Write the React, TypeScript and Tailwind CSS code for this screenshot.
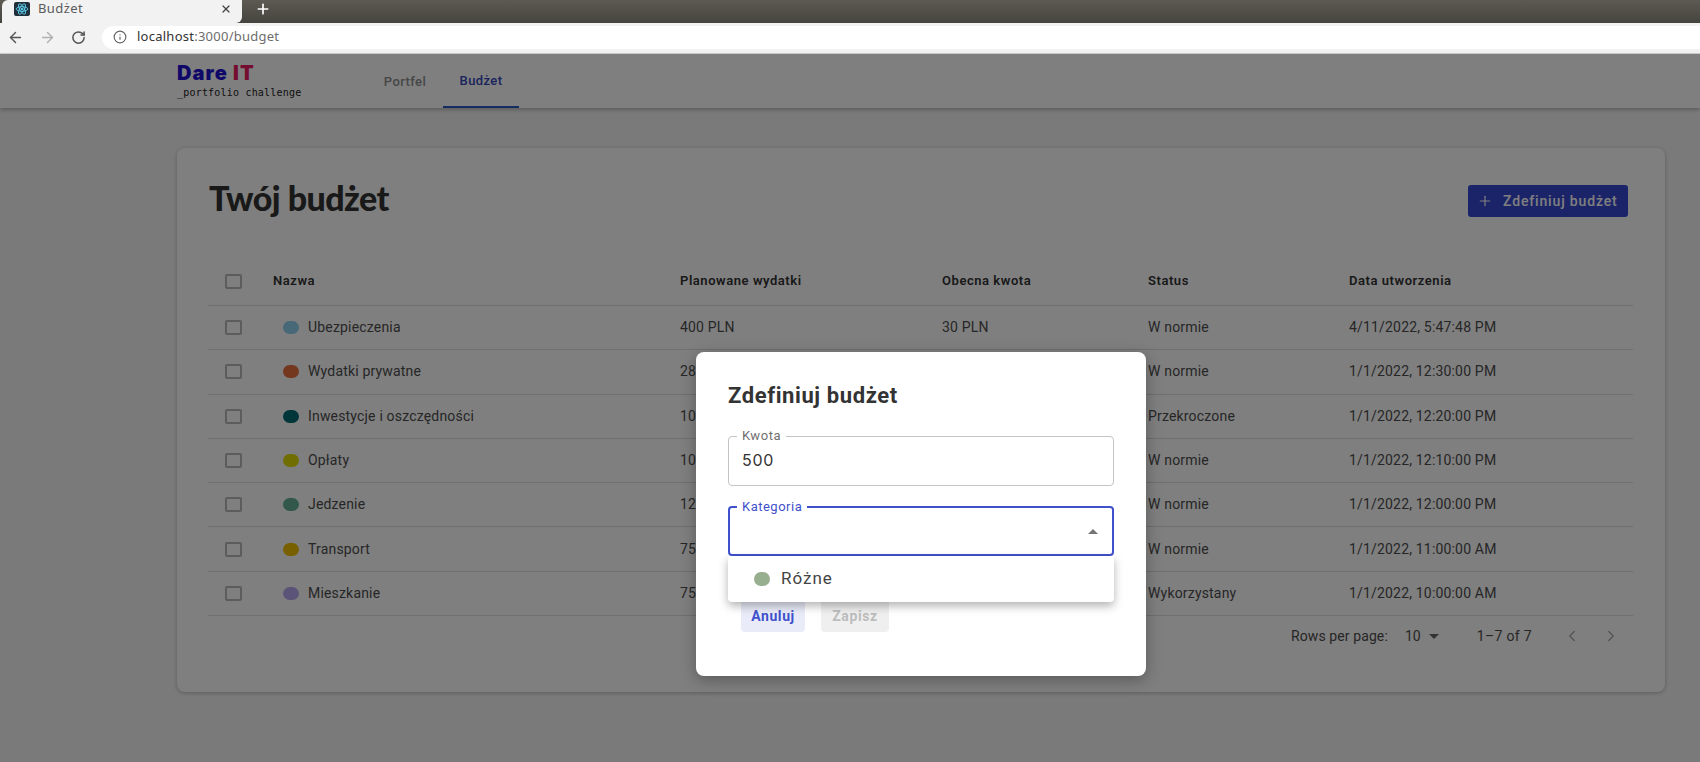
import { ArrowLeft, ArrowRight, ChevronLeft, ChevronRight, Info, Plus, RotateCw, X } from "lucide-react";

type BudgetRow = {
  name: string;
  color: string;
  planned: string;
  current: string;
  status: string;
  created: string;
};

const rows: BudgetRow[] = [
  { name: "Ubezpieczenia", color: "#8fd0ee", planned: "400 PLN", current: "30 PLN", status: "W normie", created: "4/11/2022, 5:47:48 PM" },
  { name: "Wydatki prywatne", color: "#e8703c", planned: "280 PLN", current: "100 PLN", status: "W normie", created: "1/1/2022, 12:30:00 PM" },
  { name: "Inwestycje i oszczędności", color: "#006b75", planned: "100 PLN", current: "150 PLN", status: "Przekroczone", created: "1/1/2022, 12:20:00 PM" },
  { name: "Opłaty", color: "#e0dc00", planned: "100 PLN", current: "50 PLN", status: "W normie", created: "1/1/2022, 12:10:00 PM" },
  { name: "Jedzenie", color: "#62b094", planned: "120 PLN", current: "80 PLN", status: "W normie", created: "1/1/2022, 12:00:00 PM" },
  { name: "Transport", color: "#f0c000", planned: "75 PLN", current: "20 PLN", status: "W normie", created: "1/1/2022, 11:00:00 AM" },
  { name: "Mieszkanie", color: "#b8a8f0", planned: "750 PLN", current: "750 PLN", status: "Wykorzystany", created: "1/1/2022, 10:00:00 AM" },
];

const gridCols = "grid grid-cols-[65px_407px_262px_206px_201px_1fr] items-center";

const Checkbox = () => (
  <div className="ml-[17px] h-[15px] w-[17px] rounded-[2px] border-2 border-[#b8b8b8]" />
);

const BrowserChrome = () => (
  <div className="font-['Noto_Sans',sans-serif]">
    <div className="flex h-[23px] items-start bg-gradient-to-b from-[#5c5a53] to-[#46443e]">
      <div className="ml-[2px] flex h-[23px] w-[240px] items-center rounded-tl-md rounded-br-md bg-[#f2f2f2] pb-[6px] pl-[12px] pr-[4px]">
        <div className="flex h-[14px] w-[16px] items-center justify-center rounded-[2px] bg-[#20303a]">
          <svg viewBox="0 0 24 24" width="14" height="14" fill="none" stroke="#61dafb" strokeWidth="1.4">
            <ellipse cx="12" cy="12" rx="10" ry="4" />
            <ellipse cx="12" cy="12" rx="10" ry="4" transform="rotate(60 12 12)" />
            <ellipse cx="12" cy="12" rx="10" ry="4" transform="rotate(120 12 12)" />
            <circle cx="12" cy="12" r="1.6" fill="#61dafb" />
          </svg>
        </div>
        <span className="ml-[8px] text-[13px] tracking-[0.4px] text-[#5a5a5a]">Budżet</span>
        <X className="ml-auto mr-[6px] text-[#444]" size={12} strokeWidth={2.5} />
      </div>
      <Plus className="ml-[13px] mt-[1px] text-white" size={16} strokeWidth={2.5} />
    </div>
    <div className="flex h-[31px] items-center border-b border-[#d0d0d0] bg-[#f2f2f2] pb-[2px]">
      <ArrowLeft className="ml-[7px] text-[#555]" size={17} strokeWidth={2} />
      <ArrowRight className="ml-[15px] text-[#b0b0b0]" size={17} strokeWidth={2} />
      <RotateCw className="ml-[15px] text-[#555]" size={15} strokeWidth={2.4} />
      <div className="ml-[16px] flex h-[23px] flex-1 items-center rounded-l-full bg-white pl-[11px]">
        <Info className="text-[#666]" size={14} strokeWidth={2} />
        <span className="ml-[10px] text-[13px] tracking-[0.25px] text-[#333]">
          localhost<span className="text-[#6d6d6d]">:3000/budget</span>
        </span>
      </div>
    </div>
  </div>
);

const TopNav = () => (
  <header className="flex h-[54px] bg-white pl-[177px] shadow-[0_2px_4px_rgba(0,0,0,0.25)]">
    <div className="w-[190px] pt-[9px]">
      <div className="font-['Inter',sans-serif] text-[20px] font-black leading-[20px] tracking-[1.1px] text-[#2010d0]">
        Dare <span className="text-[#e81a60]">IT</span>
      </div>
      <div className="mt-[4px] font-['DejaVu_Sans_Mono',monospace] text-[10px] leading-[12px] tracking-[0.2px] text-[#222]">
        _portfolio challenge
      </div>
    </div>
    <nav className="flex text-[13px] font-medium tracking-[0.4px]">
      <div className="flex w-[76px] items-center justify-center pt-[2px] text-[#8e8e8e]">Portfel</div>
      <div className="flex w-[76px] items-center justify-center border-b-2 border-[#2a5bc0] pt-[2px] text-[#3448b8]">
        Budżet
      </div>
    </nav>
  </header>
);

const BudgetCard = () => (
  <section className="mx-[35px] ml-[177px] mt-[40px] h-[544px] rounded-lg bg-white pl-[31px] pr-[32px] shadow-[0_1px_4px_rgba(0,0,0,0.25)]">
    <div className="flex h-[108px] items-start justify-between">
      <h1 className="ml-[1px] mt-[30px] font-['Lato',sans-serif] text-[34px] font-black leading-[40px] tracking-[-0.55px] text-[#333]">
        Twój budżet
      </h1>
      <button className="mr-[5px] mt-[37px] flex h-[32px] w-[160px] items-center rounded-[3px] bg-[#3649d2] pl-[9px] text-[14px] font-medium tracking-[0.85px] text-white">
        <Plus size={16} strokeWidth={1.8} />
        <span className="ml-[10px]">Zdefiniuj budżet</span>
      </button>
    </div>

    <div className={`${gridCols} h-[50px] border-b border-[#dedede] pt-[1px] text-[13px] font-semibold tracking-[0.55px] text-[#333]`}>
      <Checkbox />
      <div>Nazwa</div>
      <div>Planowane wydatki</div>
      <div>Obecna kwota</div>
      <div>Status</div>
      <div>Data utworzenia</div>
    </div>

    {rows.map((row) => (
      <div
        key={row.name}
        className={`${gridCols} h-[44.3px] border-b border-[#dedede] text-[14px] tracking-[0.18px] text-[#4d4d4d]`}
      >
        <Checkbox />
        <div className="flex items-center pl-[10px]">
          <span className="h-[13px] w-[16px] rounded-full" style={{ backgroundColor: row.color }} />
          <span className="ml-[9px]">{row.name}</span>
        </div>
        <div>{row.planned}</div>
        <div>{row.current}</div>
        <div>{row.status}</div>
        <div>{row.created}</div>
      </div>
    ))}

    <div className="flex h-[40px] items-center text-[14px] tracking-[0.1px] text-[#4d4d4d]">
      <span className="ml-[1083px]">Rows per page:</span>
      <span className="ml-[17px]">10</span>
      <svg className="ml-[8px]" viewBox="0 0 10 5" width="10" height="5" fill="#666">
        <path d="M0 0h10L5 5z" />
      </svg>
      <span className="ml-[38px] tracking-[0.3px]">1–7 of 7</span>
      <ChevronLeft className="ml-[31px] text-[#a8a8a8]" size={18} strokeWidth={1.8} />
      <ChevronRight className="ml-[21px] text-[#a8a8a8]" size={18} strokeWidth={1.8} />
    </div>
  </section>
);

const BudgetDialog = () => (
  <div className="absolute left-[696px] top-[298px] h-[324px] w-[450px] rounded-lg bg-white pl-[32px] pr-[32px] pt-[32px] font-['Roboto',sans-serif] shadow-[0_4px_16px_rgba(0,0,0,0.3)]">
    <h2 className="text-[22px] font-bold leading-[24px] tracking-[0.6px] text-[#333]">Zdefiniuj budżet</h2>

    <div className="relative mt-[28px] flex h-[50px] items-center rounded border border-[#c4c4c4] pb-[2px] pl-[13px] font-['Inter',sans-serif] text-[16px] tracking-[0.7px] text-[#333]">
      <span className="absolute -top-[8px] left-[8px] bg-white px-[5px] font-['Roboto',sans-serif] text-[13px] leading-[14px] tracking-[0.6px] text-[#6f6f6f]">
        Kwota
      </span>
      500
    </div>

    <div className="relative mt-[20px] flex h-[50px] items-center justify-end rounded border-2 border-[#3f51cc] pr-[14px]">
      <span className="absolute -top-[8px] left-[7px] bg-white px-[5px] text-[13px] leading-[14px] tracking-[0.5px] text-[#3f51cc]">
        Kategoria
      </span>
      <svg viewBox="0 0 10 5" width="10" height="5" fill="#757575">
        <path d="M0 5h10L5 0z" />
      </svg>
    </div>

    <div className="flex pl-[13px] pt-[44px] text-[14px] font-bold tracking-[0.6px]">
      <button className="h-[32px] w-[64px] rounded bg-[#e9ebf9] text-[#3f51cc]">Anuluj</button>
      <button className="ml-[16px] h-[32px] w-[68px] rounded bg-[#efefef] text-[#bdbdbd]">Zapisz</button>
    </div>

    <div className="absolute left-[32px] right-[32px] top-[204px] flex h-[46px] items-center rounded-b bg-white pl-[26px] text-[17px] tracking-[1px] text-[#444] shadow-[0_4px_10px_rgba(0,0,0,0.3)]">
      <span className="h-[14px] w-[16px] rounded-full bg-[#97ae8f]" />
      <span className="ml-[11px]">Różne</span>
    </div>
  </div>
);

export default function App() {
  return (
    <div className="h-[762px] w-[1700px] overflow-hidden font-['Roboto',sans-serif]">
      <BrowserChrome />
      <div className="relative h-[708px] bg-[#f5f5f5]">
        <TopNav />
        <BudgetCard />
        <div className="absolute inset-0 bg-black/50" />
        <BudgetDialog />
      </div>
    </div>
  );
}
